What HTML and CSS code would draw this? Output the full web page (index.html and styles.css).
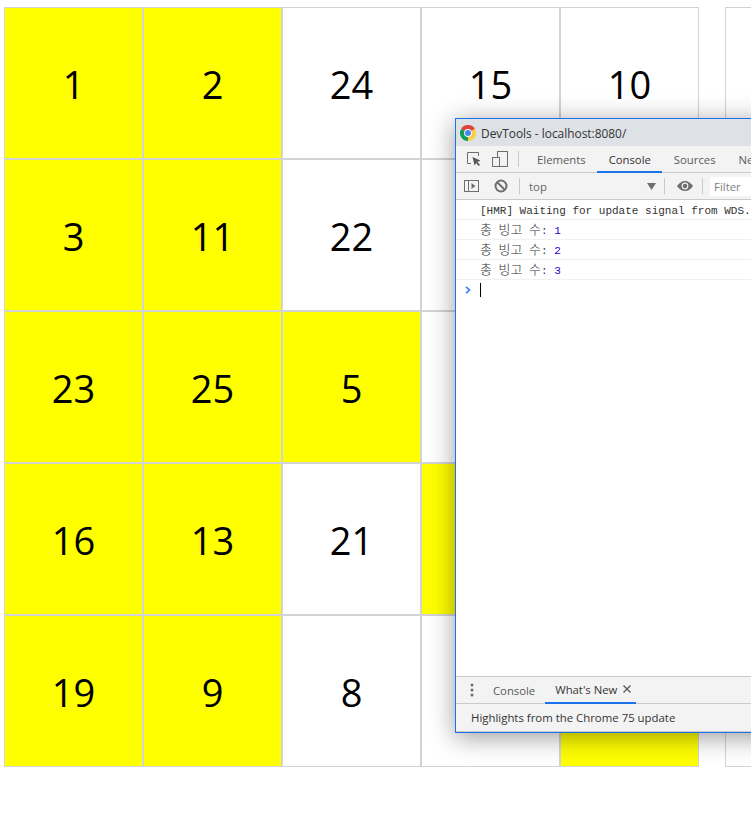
FILE: index.html
```html
<!DOCTYPE html>
<html lang="en">
<head>
    <meta charset="UTF-8">
    <meta name="viewport" content="width=device-width, initial-scale=1.0">
    <title>Bingo</title>
    <link rel="stylesheet" href="styles.css">
</head>
<body>
    <div class="boards">
        <div class="board">
            <div class="cell on">1</div><div class="cell on">2</div><div class="cell">24</div><div class="cell">15</div><div class="cell">10</div>
            <div class="cell on">3</div><div class="cell on">11</div><div class="cell">22</div><div class="cell">4</div><div class="cell">6</div>
            <div class="cell on">23</div><div class="cell on">25</div><div class="cell on">5</div><div class="cell">7</div><div class="cell">12</div>
            <div class="cell on">16</div><div class="cell on">13</div><div class="cell">21</div><div class="cell on">14</div><div class="cell">17</div>
            <div class="cell on">19</div><div class="cell on">9</div><div class="cell">8</div><div class="cell">18</div><div class="cell on">20</div>
        </div>
        <div class="board">
            <div class="cell"></div><div class="cell"></div><div class="cell"></div><div class="cell"></div><div class="cell"></div>
            <div class="cell"></div><div class="cell"></div><div class="cell"></div><div class="cell"></div><div class="cell"></div>
            <div class="cell"></div><div class="cell"></div><div class="cell"></div><div class="cell"></div><div class="cell"></div>
            <div class="cell"></div><div class="cell"></div><div class="cell"></div><div class="cell"></div><div class="cell"></div>
            <div class="cell"></div><div class="cell"></div><div class="cell"></div><div class="cell"></div><div class="cell"></div>
        </div>
    </div>

    <div class="devtools">
        <div class="titlebar">
            <svg class="chrome-logo" width="16" height="16" viewBox="0 0 16 16">
                <path d="M8 8 L1.07 4 A8 8 0 0 1 14.93 4 Z" fill="#db4437"/>
                <path d="M8 8 L14.93 4 A8 8 0 0 1 8 16 Z" fill="#ffcd40"/>
                <path d="M8 8 L8 16 A8 8 0 0 1 1.07 4 Z" fill="#0f9d58"/>
                <circle cx="8" cy="8" r="3.9" fill="#fff"/>
                <circle cx="8" cy="8" r="3" fill="#4285f4"/>
            </svg>
            <span>DevTools - localhost:8080/</span>
        </div>

        <div class="tabbar">
            <svg class="tool-icon" width="16" height="16" viewBox="0 0 16 16">
                <path d="M5 12.5H1.5V1.5H12.5V5" fill="none" stroke="#6e6e6e" stroke-width="1"/>
                <path d="M6.5 6L14.5 9.5L11.5 11L14 14L12.5 15L10.2 12L8.5 14.5Z" fill="#5a5a5a"/>
            </svg>
            <svg class="tool-icon device" width="16" height="16" viewBox="0 0 16 16">
                <rect x="5.5" y="0.5" width="10" height="15" fill="none" stroke="#6e6e6e"/>
                <rect x="0.5" y="6.5" width="7" height="9" fill="#f3f3f3" stroke="#6e6e6e"/>
            </svg>
            <i class="divider"></i>
            <div class="tab">Elements</div>
            <div class="tab active">Console</div>
            <div class="tab">Sources</div>
            <div class="tab">Network</div>
        </div>

        <div class="filterbar">
            <svg class="tool-icon" width="16" height="14" viewBox="0 0 16 14">
                <rect x="0.5" y="1.5" width="14" height="11" fill="none" stroke="#6e6e6e"/>
                <path d="M4.5 1.5V12.5" stroke="#6e6e6e"/>
                <path d="M7.5 4L11.5 7L7.5 10Z" fill="#6e6e6e"/>
            </svg>
            <svg class="tool-icon clear" width="14" height="14" viewBox="0 0 14 14">
                <circle cx="7" cy="7" r="5.5" fill="none" stroke="#6e6e6e" stroke-width="2"/>
                <path d="M3 3L11 11" stroke="#6e6e6e" stroke-width="2"/>
            </svg>
            <i class="divider"></i>
            <div class="context">
                <span>top</span>
                <svg width="9" height="7" viewBox="0 0 9 7"><path d="M0 0H9L4.5 7Z" fill="#6e6e6e"/></svg>
            </div>
            <i class="divider"></i>
            <svg class="eye" width="16" height="10" viewBox="0 0 16 10">
                <path d="M0 5C2 2 5 0 8 0S14 2 16 5C14 8 11 10 8 10S2 8 0 5Z" fill="#6e6e6e"/>
                <circle cx="8" cy="5" r="3.4" fill="#f3f3f3"/>
                <circle cx="8" cy="5" r="2.2" fill="#6e6e6e"/>
            </svg>
            <i class="divider"></i>
            <div class="filter-input">Filter</div>
        </div>

        <div class="console">
            <div class="line">[HMR] Waiting for update signal from WDS...</div>
            <div class="line"><span class="ko">총</span> <span class="ko">빙고</span> <span class="ko">수</span>: <span class="num">1</span></div>
            <div class="line"><span class="ko">총</span> <span class="ko">빙고</span> <span class="ko">수</span>: <span class="num">2</span></div>
            <div class="line"><span class="ko">총</span> <span class="ko">빙고</span> <span class="ko">수</span>: <span class="num">3</span></div>
            <div class="prompt">
                <svg width="6" height="8" viewBox="0 0 6 8"><path d="M1 0.8L4.5 4L1 7.2" fill="none" stroke="#367cf1" stroke-width="1.6"/></svg>
                <i class="caret"></i>
            </div>
        </div>

        <div class="drawer-tabs">
            <svg class="kebab" width="4" height="14" viewBox="0 0 4 14">
                <circle cx="2" cy="2" r="1.5" fill="#6e6e6e"/>
                <circle cx="2" cy="7" r="1.5" fill="#6e6e6e"/>
                <circle cx="2" cy="12" r="1.5" fill="#6e6e6e"/>
            </svg>
            <div class="tab">Console</div>
            <div class="tab active">
                <span>What's New</span>
                <svg class="close" width="8" height="8" viewBox="0 0 8 8"><path d="M0.5 0.5L7.5 7.5M7.5 0.5L0.5 7.5" stroke="#5a5a5a" stroke-width="1.4"/></svg>
            </div>
        </div>
        <div class="drawer-status">Highlights from the Chrome 75 update</div>
    </div>
</body>
</html>
```

FILE: styles.css
```css
*{
    margin: 0;
    padding: 0;
    box-sizing: border-box;
}

:root{
    --line: #d3d3d3;
    --panel: #f3f3f3;
    --panelLine: #cbcbcb;
    --blue: #1a73e8;
    --tabText: #5a5a5a;
}

html, body{
    height: 100%;
    overflow: hidden;
}

body{
    background-color: #fff;
    color: #000;
    font-family: "Open Sans", "Noto Sans", sans-serif;
}

.boards{
    display: flex;
    gap: 26px;
    padding: 7px 0 0 4px;
}

.board{
    flex: none;
    display: grid;
    grid-template-columns: repeat(5, 139px);
    grid-auto-rows: 152px;
}

.cell{
    display: flex;
    align-items: center;
    justify-content: center;
    padding-top: 1px;
    border: 1px solid var(--line);
    font-size: 38px;
}

.cell.on{
    background-color: #ff0;
}

/* floating devtools window */
.devtools{
    position: absolute;
    left: 455px;
    top: 118px;
    width: 420px;
    height: 615px;
    display: flex;
    flex-direction: column;
    background-color: #fff;
    border: 1px solid var(--blue);
    box-shadow: 0 4px 24px rgba(0, 0, 0, 0.4);
    font-size: 11.4px;
}

.titlebar{
    height: 27px;
    flex: none;
    display: flex;
    align-items: center;
    gap: 5px;
    padding-left: 4px;
    background-color: #dee1e6;
    color: #333;
    font-size: 11.9px;
}

.tabbar, .filterbar, .drawer-tabs{
    flex: none;
    display: flex;
    align-items: center;
    background-color: var(--panel);
    border-bottom: 1px solid var(--panelLine);
}

.tabbar{
    height: 27px;
    padding-left: 10px;
}

.filterbar{
    height: 27px;
    padding-left: 8px;
}

.tool-icon{
    flex: none;
}

.device{
    margin-left: 10px;
}

.clear{
    margin-left: 14px;
}

.divider{
    flex: none;
    width: 1px;
    height: 16px;
    background-color: var(--panelLine);
}

.tabbar .divider{
    margin: 0 6.5px 0 10px;
}

.tab{
    flex: none;
    height: 100%;
    display: flex;
    align-items: center;
    gap: 6px;
    padding: 0 11.5px;
    color: var(--tabText);
    font-size: 11.3px;
}

.tab.active{
    padding-top: 2px;
    color: #333;
    border-bottom: 2px solid var(--blue);
    margin-bottom: -1px;
}

.filterbar .divider{
    margin-left: 11px;
}

.context{
    flex: none;
    width: 144px;
    display: flex;
    align-items: center;
    justify-content: space-between;
    padding: 0 8px 0 9px;
    color: #666;
}

.context + .divider{
    margin-left: 0;
}

.eye{
    flex: none;
    margin: 0 -2px 0 12px;
}

.filter-input{
    margin-left: 7px;
    flex: 1;
    height: 19px;
    padding-left: 4px;
    line-height: 19px;
    background-color: #fff;
    color: #808080;
}

.console{
    flex: 1;
    font-family: "Liberation Mono", "Noto Sans CJK KR", monospace;
    font-size: 11px;
}

.line{
    height: 20px;
    padding: 1px 0 0 24px;
    line-height: 20px;
    border-bottom: 1px solid #f0f0f0;
    color: #333;
    white-space: nowrap;
}

.ko{
    font-family: "Noto Sans CJK KR", sans-serif;
    font-size: 13px;
    font-weight: 300;
    line-height: 1;
}

.num{
    color: #1c00cf;
}

.prompt{
    display: flex;
    align-items: center;
    gap: 9px;
    height: 20px;
    padding-left: 9px;
}

.caret{
    width: 1px;
    height: 14px;
    background-color: #000;
}

.drawer-tabs{
    height: 28px;
    padding-left: 14px;
    border-top: 1px solid var(--panelLine);
}

.drawer-tabs .tab{
    padding: 0 10px;
}

.kebab{
    margin-right: 9px;
}

.close{
    margin: -1px -5px 0 0;
}

.drawer-status{
    flex: none;
    height: 28px;
    padding-left: 15px;
    line-height: 27px;
    background-color: var(--panel);
    border-bottom: 1px solid var(--panelLine);
    color: #333;
}
```
